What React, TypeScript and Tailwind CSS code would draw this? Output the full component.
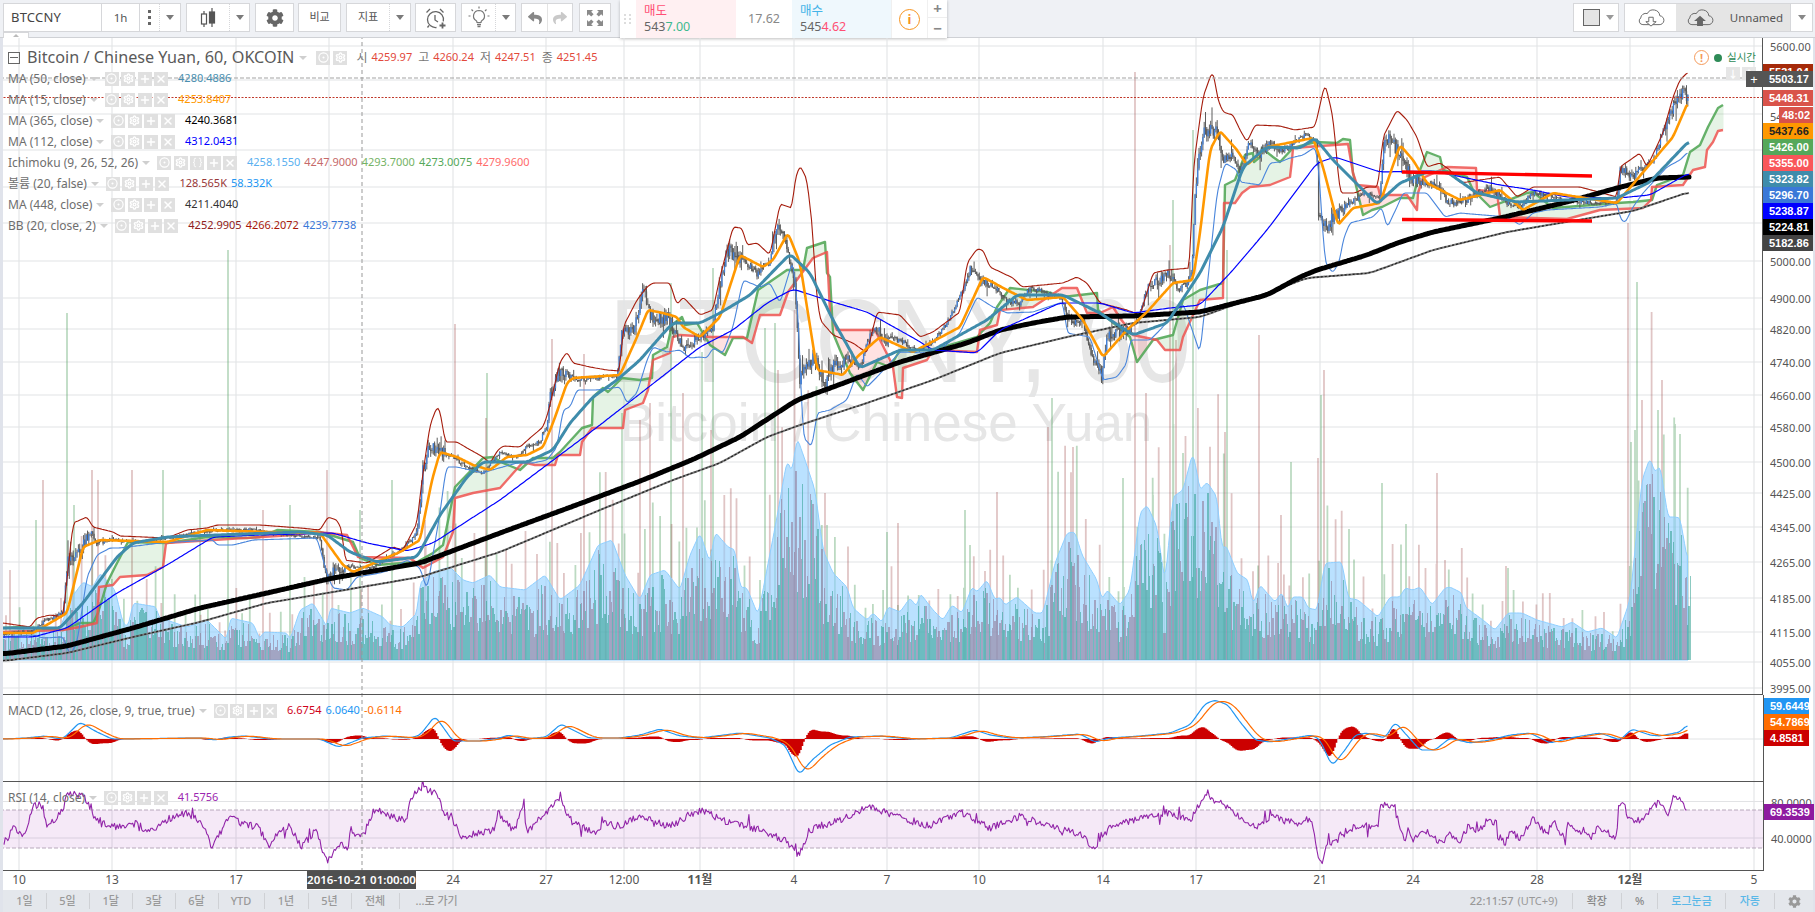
import { Braces, CircleDot, Plus, Settings, X } from "lucide-react";
import { FaCog, FaReply, FaShare } from "react-icons/fa";

type Pt = number[];

const pts = (s: string): Pt[] => s.trim().split(/\s+/).map((p) => p.split(",").map(Number));

const at = (k: Pt[], x: number) => {
    if (x <= k[0][0]) return k[0][1];
    for (let i = 1; i < k.length; i++) {
        const [x0, y0] = k[i - 1];
        const [x1, y1] = k[i];
        if (x >= x0 && x <= x1 && x1 > x0) return y0 + ((y1 - y0) * (x - x0)) / (x1 - x0);
    }
    return k[k.length - 1][1];
};

const toD = (p: Pt[]) => "M" + p.map(([x, y]) => `${x.toFixed(1)} ${y.toFixed(1)}`).join("L");

// resample the key points, then a box average so the lines read as moving averages
const smooth = (k: Pt[], r: number) => {
    const raw: Pt[] = [];
    for (let x = k[0][0]; x <= k[k.length - 1][0]; x += 1.5) raw.push([x, at(k, x)]);
    return raw.map(([x], i) => {
        let sum = 0;
        let n = 0;
        for (let j = Math.max(0, i - r); j <= Math.min(raw.length - 1, i + r); j++) {
            sum += raw[j][1];
            n++;
        }
        return [x, sum / n];
    });
};

let seed = 20161021;
const rnd = () => {
    seed = (seed * 1664525 + 1013904223) % 4294967296;
    return seed / 4294967296;
};

const ma365 = pts("3,654 67,646 133,628 200,608 267,593 333,578 420,563 500,533 579,504 643,480 694,459 740,437 797,400 833,387 900,362 967,343 1000,330 1033,323 1067,317 1133,316 1200,312 1267,295 1300,277 1317,270 1367,255 1400,242 1433,232 1500,218 1567,202 1617,188 1657,178 1689,177");
const ma448 = pts("3,661 67,653 133,637 200,622 267,603 333,592 420,577 500,552 600,510 673,480 720,463 767,437 800,425 867,403 933,380 1000,353 1067,337 1133,323 1200,317 1267,293 1307,278 1370,273 1433,250 1507,232 1590,218 1633,211 1689,192");
const ma112 = pts("3,637 33,637 67,628 117,593 167,565 213,537 260,535 333,533 367,543 407,551 433,543 500,500 600,425 700,347 733,330 767,303 793,289 833,302 867,312 917,340 933,350 977,353 1000,330 1060,303 1100,303 1133,313 1170,308 1200,305 1233,270 1267,230 1317,163 1335,157 1380,172 1433,171 1500,185 1533,190 1567,197 1618,198 1650,195 1689,173");
const ma50 = pts("3,628 60,628 83,603 117,557 133,543 167,537 217,535 300,532 327,535 350,552 377,562 417,557 440,515 467,477 483,462 527,462 553,450 570,423 593,397 617,380 640,360 660,337 673,323 700,323 720,313 750,295 790,254 810,273 833,320 860,368 900,350 933,350 987,320 1017,295 1063,295 1100,313 1133,335 1167,323 1200,273 1223,227 1243,167 1267,147 1300,148 1315,138 1333,160 1377,204 1400,183 1427,172 1447,172 1477,193 1517,202 1617,198 1650,182 1689,141");
const ma15 = pts("3,633 33,633 67,613 83,547 100,540 167,542 207,530 267,532 320,533 343,565 353,572 400,552 420,540 432,480 440,452 457,457 473,465 490,470 507,457 527,455 543,447 553,423 567,383 573,378 620,375 637,337 648,310 663,313 677,317 683,327 700,337 720,317 740,255 763,267 773,260 788,233 800,263 817,370 843,375 857,357 880,337 913,352 960,327 983,277 1007,290 1027,300 1063,297 1083,320 1103,357 1127,330 1147,312 1173,283 1193,280 1200,233 1210,150 1220,131 1237,150 1247,165 1267,147 1313,138 1323,167 1338,225 1353,208 1380,203 1400,145 1413,160 1427,183 1460,200 1500,190 1523,210 1553,193 1617,203 1673,137 1688,102");
const candles = pts("3,634 33,631 43,622 63,613 68,558 80,553 90,530 97,543 113,540 140,542 170,538 200,532 230,530 253,530 283,535 320,538 326,577 333,573 347,567 373,568 400,551 417,533 423,470 430,445 437,448 457,460 473,470 483,473 500,453 517,457 527,447 540,440 547,427 550,397 560,370 573,380 583,380 600,377 617,377 622,333 633,333 643,290 650,313 653,320 667,317 673,327 683,347 697,340 713,330 717,297 727,250 743,260 757,273 770,263 777,220 787,243 795,290 800,380 807,367 815,357 825,387 833,367 847,360 860,367 873,327 887,340 897,340 917,350 933,343 947,323 963,290 970,270 980,280 993,287 1007,300 1020,303 1030,288 1060,297 1070,320 1083,323 1093,357 1102,377 1107,333 1123,333 1137,323 1148,287 1167,273 1180,290 1192,277 1195,190 1200,147 1205,130 1217,130 1223,160 1233,157 1240,173 1250,140 1260,153 1270,143 1280,150 1290,147 1307,133 1317,143 1318,217 1327,230 1333,217 1350,203 1367,193 1380,197 1383,153 1387,137 1400,153 1413,180 1427,183 1440,187 1447,203 1467,200 1490,187 1507,203 1520,207 1533,193 1567,200 1593,203 1617,203 1620,167 1633,175 1653,160 1663,133 1675,103 1683,92 1688,100");
const bbUp = pts("3,623 30,627 37,618 50,615 63,617 73,523 87,517 93,527 113,532 120,536 167,538 187,530 207,528 217,525 260,525 300,528 320,530 328,517 337,520 343,533 344,560 367,563 393,547 403,550 417,523 422,480 430,425 437,407 440,410 445,442 457,442 467,448 483,457 490,463 498,450 503,446 520,447 530,438 543,427 548,413 560,362 567,352 573,363 590,367 607,370 620,371 623,327 637,300 647,287 653,283 670,283 677,305 683,297 700,315 713,310 720,277 733,227 742,228 747,245 757,243 770,255 780,204 792,208 795,180 800,165 807,180 813,233 815,280 820,320 833,335 853,343 867,353 877,312 900,315 920,337 933,332 960,312 967,263 977,249 983,250 990,267 1013,278 1022,287 1063,283 1077,277 1087,283 1100,303 1127,310 1140,315 1153,273 1167,270 1190,268 1193,170 1203,97 1212,72 1215,80 1217,97 1223,112 1233,115 1240,130 1247,142 1255,125 1280,126 1295,130 1315,127 1325,83 1333,117 1340,193 1355,193 1367,187 1378,187 1383,137 1397,110 1407,120 1417,137 1427,167 1440,163 1450,170 1460,183 1500,177 1517,197 1533,187 1580,187 1617,197 1620,167 1640,153 1647,167 1663,133 1673,97 1680,80 1688,72");
const bbLo = pts("3,637 33,635 43,638 63,637 70,655 77,643 87,577 97,555 110,548 120,548 160,543 213,540 217,545 233,545 253,540 317,538 328,577 333,588 347,590 357,577 380,573 390,570 407,560 420,568 427,590 440,513 445,475 447,467 457,467 483,473 492,470 517,463 533,463 547,460 557,447 563,410 570,407 577,390 597,390 620,387 627,403 637,393 647,360 653,347 667,352 680,350 690,358 700,357 707,358 713,348 723,353 733,327 743,280 760,287 770,283 780,303 793,260 798,313 803,437 812,447 817,413 830,410 847,400 857,373 867,387 877,377 900,352 927,353 940,350 960,333 977,297 993,307 1007,313 1033,312 1063,302 1067,333 1090,337 1103,380 1117,377 1127,363 1130,340 1150,340 1160,330 1183,303 1200,353 1210,260 1217,193 1225,163 1237,170 1240,182 1260,185 1270,163 1280,162 1290,158 1303,155 1315,147 1318,160 1325,263 1333,273 1340,260 1343,240 1350,223 1373,217 1382,207 1387,228 1397,207 1403,193 1427,193 1445,217 1460,213 1507,217 1520,225 1533,213 1547,210 1600,207 1618,203 1619,217 1625,223 1633,207 1643,193 1667,167 1680,160 1688,152");
const spanA = pts("3,628 20,627 63,630 80,623 93,623 98,613 107,583 115,567 128,542 167,543 207,537 247,538 260,537 277,530 320,532 353,542 360,558 377,565 417,562 433,553 443,545 455,487 483,458 493,457 503,463 520,470 533,458 553,458 560,452 582,428 592,425 593,397 603,388 608,392 622,378 640,380 652,378 653,355 667,347 672,325 682,317 685,325 697,323 710,345 725,355 733,338 747,338 758,290 787,270 803,270 807,248 825,242 827,273 830,277 833,333 840,350 850,373 863,390 877,362 890,367 900,350 933,350 977,337 990,323 997,307 1010,288 1047,292 1063,297 1080,295 1097,293 1098,310 1130,337 1137,362 1153,340 1173,335 1183,300 1200,290 1223,283 1225,185 1235,180 1245,155 1253,153 1254,162 1260,157 1262,148 1273,157 1280,162 1293,148 1315,142 1337,143 1343,139 1350,140 1353,173 1363,215 1372,210 1382,207 1400,198 1413,198 1420,170 1427,152 1440,157 1443,170 1467,177 1473,190 1490,207 1527,193 1533,192 1553,208 1617,203 1633,202 1652,200 1657,185 1683,175 1690,152 1700,145 1708,127 1718,108 1723,105");
const spanB = pts("3,632 63,630 80,627 97,623 99,587 113,585 120,577 147,575 163,567 166,543 293,535 317,532 347,535 358,557 410,558 423,568 443,557 453,532 455,498 473,493 500,488 523,462 535,465 555,465 558,455 580,455 582,442 592,428 623,428 625,410 643,403 648,390 653,360 670,353 673,337 680,335 712,337 743,337 752,343 760,315 780,315 788,292 813,258 827,252 828,272 830,313 837,330 875,330 890,360 893,367 897,397 902,398 903,368 927,360 933,350 977,352 980,330 997,325 1000,310 1033,307 1062,288 1077,288 1087,313 1100,313 1113,307 1120,318 1133,335 1157,340 1165,350 1180,350 1183,337 1200,300 1223,298 1224,203 1235,203 1242,193 1250,187 1270,185 1290,177 1292,160 1293,148 1348,144 1353,173 1357,185 1378,187 1380,195 1407,195 1417,210 1418,193 1423,178 1447,167 1476,168 1477,190 1497,192 1500,217 1567,219 1600,210 1643,208 1651,200 1652,187 1683,185 1693,170 1705,167 1707,150 1713,142 1718,131 1723,130");
const vma = pts("3,632 30,628 60,628 72,597 83,582 93,587 100,573 115,590 123,623 128,627 133,603 157,607 158,617 187,627 207,620 227,640 230,618 253,623 260,640 263,632 287,633 290,640 300,610 313,603 327,627 330,608 350,613 363,608 383,617 390,625 403,627 417,613 420,583 433,572 450,567 463,580 473,583 490,575 500,587 525,590 545,575 560,600 580,585 598,545 612,540 625,575 640,600 650,575 665,570 680,590 690,555 700,533 710,563 715,532 728,547 735,550 740,587 747,588 758,615 763,590 777,517 787,460 792,472 797,437 805,460 815,490 823,550 833,573 847,587 853,608 867,620 873,613 882,622 888,607 900,612 910,598 917,607 920,593 933,610 943,620 952,605 962,613 972,587 977,592 987,580 995,600 1000,597 1005,605 1017,597 1035,613 1043,613 1055,563 1067,533 1075,532 1082,555 1097,580 1102,600 1107,590 1120,605 1130,590 1140,513 1147,505 1157,527 1165,583 1173,497 1183,490 1193,452 1200,490 1207,482 1217,497 1222,550 1226,545 1237,573 1248,580 1253,605 1260,585 1275,602 1282,592 1288,610 1292,597 1303,597 1308,608 1317,610 1325,563 1342,562 1348,598 1358,600 1378,617 1390,597 1400,597 1405,588 1413,590 1420,587 1432,605 1445,588 1450,587 1462,593 1465,607 1483,620 1495,630 1508,613 1522,613 1537,620 1562,627 1572,622 1587,632 1602,628 1617,638 1630,600 1642,480 1650,458 1655,473 1660,465 1668,517 1675,517 1680,518 1688,563");
const macd = pts("3,739 26,738 45,736 60,739 65,737 80,722 95,731 112,739 200,738 215,740 230,737 245,736 270,739 320,739 338,747 350,743 362,738 385,736 410,738 420,735 435,716 453,741 480,741 500,738 508,735 525,739 546,737 561,724 589,738 620,738 640,735 660,729 680,736 700,738 740,733 770,738 785,745 799,775 812,760 830,745 850,737 880,736 910,739 950,738 975,730 990,735 1010,738 1040,737 1080,734 1095,742 1110,738 1140,736 1170,733 1190,725 1205,704 1215,700 1228,705 1240,722 1255,740 1270,742 1300,737 1312,735 1320,740 1332,766 1345,750 1355,735 1367,733 1385,738 1395,722 1420,750 1435,750 1450,738 1470,743 1490,740 1510,735 1530,733 1550,743 1575,737 1600,733 1620,740 1632,729 1650,735 1660,736 1680,732 1688,724");
const rsi = pts("4,843 14,828 24,835 34,806 40,805 47,827 63,810 67,792 85,797 93,815 99,823 119,827 138,823 148,833 166,820 186,813 202,823 209,840 212,848 229,817 241,823 257,827 269,843 289,825 302,847 316,830 326,862 340,843 348,850 350,832 362,837 374,810 395,818 407,820 411,797 423,787 435,793 445,813 455,823 462,837 494,830 498,813 514,832 524,802 526,832 546,813 559,798 573,823 595,833 605,823 619,827 640,815 670,826 700,810 730,823 760,830 785,840 799,856 810,830 840,820 870,806 900,818 930,826 960,812 990,828 1020,816 1050,826 1080,834 1095,850 1110,826 1140,818 1170,812 1190,822 1204,795 1225,806 1255,828 1270,816 1300,825 1305,818 1312,822 1317,853 1323,863 1325,848 1333,840 1337,843 1340,833 1360,825 1378,828 1380,807 1387,803 1395,808 1400,827 1405,843 1408,830 1413,842 1423,828 1443,845 1448,832 1460,840 1468,827 1477,832 1488,820 1497,823 1498,847 1500,835 1505,845 1510,830 1520,840 1532,818 1547,835 1553,820 1565,840 1567,825 1590,838 1598,827 1617,837 1618,803 1625,803 1627,820 1640,820 1650,810 1658,803 1663,805 1667,818 1673,798 1682,798 1687,812");

// tall volume bars that rise well above the average line: x, top, g/p
const spikes: [number, number, string][] = [
    [10, 570, "p"], [36, 520, "g"], [43, 480, "p"], [67, 313, "g"], [74, 505, "g"], [92, 470, "p"], [98, 480, "p"], [132, 470, "p"], [163, 470, "g"], [200, 500, "g"], [228, 250, "g"], [263, 510, "p"], [290, 505, "g"], [327, 470, "p"], [360, 510, "g"], [392, 480, "g"], [425, 520, "p"], [455, 324, "p"], [487, 373, "g"], [486, 418, "p"], [552, 339, "p"], [584, 354, "p"], [622, 413, "g"], [640, 420, "p"], [650, 403, "p"], [671, 283, "g"], [683, 393, "p"], [702, 352, "g"], [713, 268, "g"], [711, 430, "p"], [765, 328, "g"], [775, 323, "g"], [778, 370, "p"], [825, 493, "p"], [827, 525, "g"], [887, 532, "g"], [898, 523, "p"], [965, 510, "g"], [970, 545, "g"], [997, 492, "p"], [1048, 427, "p"], [1052, 398, "g"], [1073, 447, "p"], [1123, 478, "g"], [1135, 72, "p"], [1153, 495, "g"], [1170, 245, "p"], [1173, 200, "g"], [1176, 340, "p"], [1183, 453, "g"], [1193, 130, "g"], [1225, 432, "p"], [1227, 250, "g"], [1259, 335, "p"], [1281, 515, "p"], [1291, 462, "g"], [1318, 458, "p"], [1321, 395, "g"], [1324, 370, "p"], [1349, 529, "g"], [1382, 483, "g"], [1406, 524, "g"], [1437, 473, "p"], [1445, 560, "p"], [1506, 566, "p"], [1508, 568, "g"], [1628, 223, "p"], [1631, 442, "g"], [1635, 430, "g"], [1637, 282, "g"], [1642, 400, "p"], [1658, 410, "g"], [1662, 380, "p"], [1675, 424, "g"], [1680, 434, "g"],
];

const buildVolume = () => {
    let g = "";
    let p = "";
    let tallG = "";
    let tallP = "";
    for (let x = 3; x <= 1691; x += 1.3) {
        const h = 660 - at(vma, x);
        const r = 0.3 + rnd() * 0.66;
        const seg = `M${x.toFixed(1)} 660V${(660 - h * r).toFixed(1)}`;
        if (rnd() > 0.5) g += seg;
        else p += seg;
    }
    for (let x = 6; x <= 1690; x += 5 + rnd() * 9) {
        const h = 660 - at(vma, x);
        const seg = `M${x.toFixed(1)} 660V${(660 - h * (1.05 + rnd() * 0.8)).toFixed(1)}`;
        if (rnd() > 0.5) tallG += seg;
        else tallP += seg;
    }
    for (const [x, top, c] of spikes) {
        if (c === "g") tallG += `M${x} 660V${top}`;
        else tallP += `M${x} 660V${top}`;
    }
    return { g, p, tallG, tallP };
};

const buildCandles = () => {
    let wick = "";
    let down = "";
    let up = "";
    let prev = at(candles, 3);
    for (let x = 3; x <= 1689; x += 1.3) {
        const amp = Math.min(8, Math.max(1.6, (at(bbLo, x) - at(bbUp, x)) / 9));
        const c = at(candles, x) + (rnd() - 0.5) * amp * 1.6;
        const hi = Math.min(prev, c) - rnd() * amp * (rnd() > 0.9 ? 2.4 : 0.8);
        const lo = Math.max(prev, c) + rnd() * amp * (rnd() > 0.9 ? 2.4 : 0.8);
        wick += `M${x.toFixed(1)} ${hi.toFixed(1)}V${lo.toFixed(1)}`;
        const seg = `M${x.toFixed(1)} ${prev.toFixed(1)}V${c.toFixed(1)}`;
        if (c < prev && prev - c > 2) up += seg;
        else down += seg;
        prev = c;
    }
    return { wick, down, up };
};

const buildCloud = () => {
    let above = "";
    let below = "";
    for (let x = 3; x <= 1723; x += 1) {
        const a = at(spanA, x);
        const b = at(spanB, x);
        const seg = `M${x} ${a.toFixed(1)}V${b.toFixed(1)}`;
        if (a < b) above += seg;
        else below += seg;
    }
    return { above, below };
};

const vol = buildVolume();
const cand = buildCandles();
const cloud = buildCloud();

const vmaD = toD(smooth(vma, 1));
const blue = smooth(macd, 2);
const orange = blue.map(([x], i) => {
    let s = 0;
    let n = 0;
    for (let j = Math.max(0, i - 9); j <= i; j++) {
        s += blue[j][1];
        n++;
    }
    return [x, s / n];
});
const histD = blue.map(([x, y], i) => `M${x.toFixed(1)} 739V${(739 - (orange[i][1] - y) * 1.3).toFixed(1)}`).join("");

const rsiPts: Pt[] = [];
for (let x = 4; x <= 1687; x += 1.3) rsiPts.push([x, at(rsi, x) + (rnd() - 0.5) * 7 + (rnd() > 0.95 ? (rnd() - 0.5) * 22 : 0)]);

const vGrid = [19, 112, 236, 329, 453, 546, 624, 700, 794, 887, 979, 1103, 1196, 1320, 1413, 1537, 1630, 1754];
const hGrid = [46, 80, 114, 150, 187, 223, 261, 298, 329, 362, 395, 427, 462, 493, 527, 562, 598, 632, 662, 688];
const CROSS_X = 362;

const Grid = ({ rows }: { rows: number[] }) => (
    <g stroke="#e2e3e5" strokeWidth="1.1">
        {vGrid.map((x) => (
            <line key={x} x1={x} x2={x} y1="0" y2="900" />
        ))}
        {rows.map((y) => (
            <line key={y} x1="0" x2="1770" y1={y} y2={y} />
        ))}
    </g>
);

const Cross = () => <line x1={CROSS_X} x2={CROSS_X} y1="0" y2="900" stroke="#999" strokeWidth="1" strokeDasharray="4 3" />;

const MainChart = () => (
    <svg viewBox="3 38 1760 656" width="1760" height="656" fill="none" className="absolute inset-0" aria-hidden="true">
        <Grid rows={hGrid} />
        <g strokeWidth="1.8">
            <path d={vol.tallG} stroke="#4f9f5f" strokeOpacity="0.38" />
            <path d={vol.tallP} stroke="#a04a4a" strokeOpacity="0.32" />
        </g>
        <path d={`${vmaD}L1688 660L3 660Z`} fill="#8fcfff" fillOpacity="0.62" stroke="#8fcfff" strokeWidth="1" />
        <g strokeWidth="1.3" shapeRendering="crispEdges">
            <path d={vol.g} stroke="#2e9e8e" strokeOpacity="0.55" />
            <path d={vol.p} stroke="#8a6a88" strokeOpacity="0.5" />
        </g>
        <path d={cloud.above} stroke="#4caf50" strokeOpacity="0.14" strokeWidth="1" />
        <path d={cloud.below} stroke="#ff4444" strokeOpacity="0.16" strokeWidth="1" />
        <path d={toD(spanA)} stroke="#55a85a" strokeOpacity="0.9" strokeWidth="2.4" strokeLinejoin="round" />
        <path d={toD(spanB)} stroke="#ef5350" strokeOpacity="0.85" strokeWidth="2.4" strokeLinejoin="round" />
        <path d={cand.wick} stroke="#5c5c5c" strokeWidth="1" />
        <path d={cand.down} stroke="#5c5c5c" strokeWidth="1.3" />
        <path d={cand.up} stroke="#3f80dc" strokeWidth="1.3" />
        <path d={toD(smooth(bbUp, 1))} stroke="#a51c0c" strokeWidth="1.1" />
        <path d={toD(smooth(bbLo, 1))} stroke="#4a86dc" strokeWidth="1.1" />
        <path d={toD(smooth(ma448, 4))} stroke="#777" strokeWidth="2" />
        <path d={toD(smooth(ma448, 4))} stroke="#222" strokeWidth="1.2" strokeDasharray="2 2" />
        <path d={toD(smooth(ma365, 4))} stroke="#000" strokeWidth="5" strokeLinecap="round" />
        <path d={toD(smooth(ma112, 3))} stroke="#0000ff" strokeWidth="1.2" />
        <path d={toD(smooth(ma15, 1))} stroke="#ff9800" strokeWidth="2.6" strokeLinejoin="round" />
        <path d={toD(smooth(ma50, 2))} stroke="#3f8cab" strokeWidth="3" strokeLinejoin="round" />
        <line x1="1402" x2="1592" y1="172" y2="176" stroke="#ff0000" strokeWidth="3.4" />
        <line x1="1402" x2="1592" y1="219.5" y2="221" stroke="#ff0000" strokeWidth="3.4" />
        <line x1="0" x2="1770" y1="78" y2="78" stroke="#a3a3a3" strokeWidth="1" strokeDasharray="4 2" />
        <line x1="0" x2="1770" y1="97.5" y2="97.5" stroke="#c0392b" strokeWidth="1" strokeDasharray="2 1.5" />
        <Cross />
    </svg>
);

const MacdChart = () => (
    <svg viewBox="3 695 1760 86" width="1760" height="86" fill="none" className="absolute inset-0" aria-hidden="true">
        <Grid rows={[739]} />
        <path d={histD} stroke="#cc0000" strokeWidth="1.6" />
        <path d={toD(blue)} stroke="#2196f3" strokeWidth="1.2" />
        <path d={toD(orange)} stroke="#ff6d00" strokeWidth="1.2" />
        <Cross />
    </svg>
);

const RsiChart = () => (
    <svg viewBox="3 782 1760 88" width="1760" height="88" fill="none" className="absolute inset-0" aria-hidden="true">
        <Grid rows={[801.5, 838]} />
        <rect x="0" y="810" width="1770" height="38" fill="#9c27b0" fillOpacity="0.1" />
        <line x1="0" x2="1770" y1="810" y2="810" stroke="#b7a8bb" strokeWidth="1" strokeDasharray="4 2" />
        <line x1="0" x2="1770" y1="848" y2="848" stroke="#b7a8bb" strokeWidth="1" strokeDasharray="4 2" />
        <path d={toD(rsiPts)} stroke="#9124a8" strokeWidth="1.1" strokeLinejoin="round" />
        <Cross />
    </svg>
);

const Caret = ({ className = "" }: { className?: string }) => (
    <span className={`h-0 w-0 border-x-[4.5px] border-t-[5px] border-x-transparent border-t-[#7a7a7a] ${className}`} />
);

const MiniCaret = () => <span className="block h-0 w-0 border-x-[4px] border-t-[4px] border-x-transparent border-t-[#cfcfcf]" />;

const Box = ({ children }: { children: React.ReactNode }) => (
    <span className="flex h-[14px] w-[14px] items-center justify-center bg-[#e0e0e0] text-white">{children}</span>
);

const LegendIcons = ({ braces = false, from }: { braces?: boolean; from: string }) => (
    <span className={`flex items-center gap-[2.5px] ${from}`}>
        <Box>
            <CircleDot size={11} strokeWidth={2.5} />
        </Box>
        <Box>
            <Settings size={11} strokeWidth={3} />
        </Box>
        {braces && (
            <Box>
                <Braces size={11} strokeWidth={2} />
            </Box>
        )}
        <Box>
            <Plus size={12} strokeWidth={3} />
        </Box>
        <Box>
            <X size={12} strokeWidth={3} />
        </Box>
    </span>
);

type Val = { t: string; c: string };

const LegendRow = ({ label, vals, braces, gap = "ml-[7px]" }: { label: string; vals: Val[]; braces?: boolean; gap?: string }) => (
    <div className="flex h-[21px] items-center text-[12px] text-[#6e6e6e]">
        <span className="whitespace-nowrap">{label}</span>
        <span className="ml-[4px]">
            <MiniCaret />
        </span>
        <LegendIcons braces={braces} from={gap} />
        <span className="ml-[10px] flex gap-[4px] whitespace-nowrap text-[11px]">
            {vals.map((v) => (
                <span key={v.t} className={v.c}>
                    {v.t}
                </span>
            ))}
        </span>
    </div>
);

const Legend = () => (
    <div className="absolute left-[5px] top-0 flex flex-col pt-[9px]">
        <div className="flex h-[21px] items-center whitespace-nowrap">
            <span className="relative flex h-[12px] w-[12px] items-center justify-center border border-[#666]">
                <span className="h-px w-[8px] bg-[#666]" />
            </span>
            <span className="ml-[7px] text-[16.2px] text-[#5a5a5a]">Bitcoin / Chinese Yuan, 60, OKCOIN</span>
            <span className="ml-[5px]">
                <MiniCaret />
            </span>
            <span className="ml-[9px] flex gap-[3px]">
                <Box>
                    <CircleDot size={11} strokeWidth={2.5} />
                </Box>
                <Box>
                    <Settings size={11} strokeWidth={3} />
                </Box>
            </span>
            <span className="ml-[9px] flex gap-[6px] text-[12px] text-[#777]">
                {[["시", "4259.97"], ["고", "4260.24"], ["저", "4247.51"], ["종", "4251.45"]].map(([k, v]) => (
                    <span key={k} className="flex items-center gap-[4px]">
                        <span>{k}</span>
                        <span className="text-[11px] text-[#e2493b]">{v}</span>
                    </span>
                ))}
            </span>
        </div>
        <LegendRow label="MA (50, close)" vals={[{ t: "4280.4886", c: "text-[#4a8fb0]" }]} />
        <LegendRow label="MA (15, close)" vals={[{ t: "4253.8407", c: "text-[#ff9800]" }]} />
        <LegendRow label="MA (365, close)" vals={[{ t: "4240.3681", c: "text-black" }]} />
        <LegendRow label="MA (112, close)" vals={[{ t: "4312.0431", c: "text-[#0000ff]" }]} />
        <LegendRow
            label="Ichimoku (9, 26, 52, 26)"
            braces
            vals={[
                { t: "4258.1550", c: "text-[#5ab0f0]" },
                { t: "4247.9000", c: "text-[#c66a6a]" },
                { t: "4293.7000", c: "text-[#75b366]" },
                { t: "4273.0075", c: "text-[#55a85a]" },
                { t: "4279.9600", c: "text-[#ff6b6b]" },
            ]}
        />
        <LegendRow
            label="볼륨 (20, false)"
            vals={[
                { t: "128.565K", c: "text-[#983838]" },
                { t: "58.332K", c: "text-[#2196f3]" },
            ]}
        />
        <LegendRow label="MA (448, close)" vals={[{ t: "4211.4040", c: "text-[#333]" }]} />
        <LegendRow
            label="BB (20, close, 2)"
            vals={[
                { t: "4252.9905", c: "text-[#8f2020]" },
                { t: "4266.2072", c: "text-[#a8180a]" },
                { t: "4239.7738", c: "text-[#3a78d8]" },
            ]}
        />
    </div>
);

const Tick = ({ y, children }: { y: number; children: string }) => (
    <span className="absolute left-[7px] -translate-y-1/2 text-[11px] leading-none text-[#555]" style={{ top: y }}>
        {children}
    </span>
);

const Tag = ({ y, bg, w = "w-[50px]", text = "text-white", children }: { y: number; bg: string; w?: string; text?: string; children: string }) => (
    <span className={`absolute left-0 flex h-[16px] items-center whitespace-nowrap pl-[6px] font-['Liberation_Sans',sans-serif] text-[11px] font-bold leading-none ${w} ${bg} ${text}`} style={{ top: y }}>
        {children}
    </span>
);

const MainAxis = () => (
    <div className="relative h-full w-[50px]">
        {[
            ["5600.00", 46], ["5400.00", 116], ["5000.00", 261], ["4900.00", 298], ["4820.00", 329], ["4740.00", 362], ["4660.00", 395], ["4580.00", 427], ["4500.00", 462], ["4425.00", 493], ["4345.00", 527], ["4265.00", 562], ["4185.00", 598], ["4115.00", 632], ["4055.00", 662], ["3995.00", 688],
        ].map(([t, y]) => (
            <Tick key={t as string} y={(y as number) - 38}>
                {t as string}
            </Tick>
        ))}
        <Tag y={26} bg="bg-[#a52a0a]">5531.04</Tag>
        <Tag y={33} bg="bg-[#555]">5503.17</Tag>
        <Tag y={52} bg="bg-[#d9534a]">5448.31</Tag>
        <span className="absolute left-[16px] top-[69px] flex h-[16px] w-[34px] items-center justify-center bg-[#d9534a] font-['Liberation_Sans',sans-serif] text-[11px] font-bold leading-none text-white">48:02</span>
        <Tag y={85} bg="bg-[#ff9800]" text="text-[#222]">5437.66</Tag>
        <Tag y={101} bg="bg-[#55a85a]">5426.00</Tag>
        <Tag y={117} bg="bg-[#f9565a]">5355.00</Tag>
        <Tag y={133} bg="bg-[#3f8cab]">5323.82</Tag>
        <Tag y={149} bg="bg-[#3a78d8]">5296.70</Tag>
        <Tag y={165} bg="bg-[#0000ff]">5238.87</Tag>
        <Tag y={181} bg="bg-black">5224.81</Tag>
        <Tag y={197} bg="bg-[#444]">5182.86</Tag>
    </div>
);

const Status = () => (
    <div className="absolute right-[6px] top-[12px] flex flex-col items-end gap-[2px]">
        <div className="flex items-center gap-[5px]">
            <span className="flex h-[15px] w-[15px] items-center justify-center rounded-full border-[1.5px] border-[#f59a5a] text-[11px] font-bold leading-none text-[#f59a5a]">!</span>
            <span className="h-[8px] w-[8px] rounded-full bg-[#2e8b57]" />
            <span className="text-[10.5px] leading-none text-[#2e8b57]">실시간</span>
        </div>
        <div className="flex gap-[2px]">
            <span className="flex h-[13px] w-[14px] items-center justify-center bg-[#e6e6e6] text-[10px] font-bold leading-none text-white">↓</span>
            <span className="flex h-[13px] w-[14px] items-center justify-center bg-[#e6e6e6] text-[10px] font-bold leading-none text-white">↑</span>
        </div>
    </div>
);

const Btn = ({ w, children, className = "" }: { w: string; children?: React.ReactNode; className?: string }) => (
    <span className={`flex h-full items-center justify-center ${w} ${className}`}>{children}</span>
);

const Group = ({ children, className = "" }: { children: React.ReactNode; className?: string }) => (
    <div className={`flex h-[29px] items-stretch border border-[#d6d7da] bg-white text-[#555] ${className}`}>{children}</div>
);

const CandleIcon = () => (
    <svg width="18" height="22" viewBox="0 0 18 22" fill="none" stroke="#555" strokeWidth="1.2" aria-hidden="true">
        <path d="M5 4v3M5 17v3M13 1v4M13 16v4" />
        <rect x="2.5" y="7" width="5" height="10" fill="#fff" />
        <rect x="10.5" y="5" width="5" height="11" fill="#555" />
    </svg>
);

const AlarmIcon = () => (
    <svg width="24" height="24" viewBox="0 0 24 24" fill="none" stroke="#666" strokeWidth="1.3" aria-hidden="true">
        <path d="M12.5 21.5a8 8 0 1 1 6.8-6.2" />
        <path d="M11 9v5l3 2M2.5 6.5l3.5-3.5M16 3l3.5 3.5M5 19.5l-1.5 2" />
        <path d="M18.5 16.5v6M15.5 19.5h6" strokeWidth="1.8" />
    </svg>
);

const BulbIcon = () => (
    <svg width="22" height="24" viewBox="0 0 22 24" fill="none" stroke="#777" strokeWidth="1.2" aria-hidden="true">
        <path d="M11 4.5a5.5 5.5 0 0 0-3 10.1c.7.5 1 1.1 1 1.9h4c0-.8.3-1.4 1-1.9a5.5 5.5 0 0 0-3-10.1z" />
        <path d="M9 18.5h4M9.5 20.5h3" strokeWidth="1.5" />
        <path d="M11 .5v2M3.5 3.5l1.5 1.5M18.5 3.5L17 5M.5 10h2M19.5 10h2" />
    </svg>
);

const ExpandIcon = () => (
    <svg width="20" height="20" viewBox="0 0 20 20" fill="#8a8a8a" aria-hidden="true">
        <path d="M2 2h6L6.2 3.8 8.6 6.2 6.2 8.6 3.8 6.2 2 8zM18 2v6l-1.8-1.8-2.4 2.4-2.4-2.4 2.4-2.4L12 2zM2 18v-6l1.8 1.8 2.4-2.4 2.4 2.4-2.4 2.4L8 18zM18 18h-6l1.8-1.8-2.4-2.4 2.4-2.4 2.4 2.4L18 12z" />
    </svg>
);

const CLOUD = "M8 21h22a6 6 0 0 0 1-12 9 9 0 0 0-17-3 7 7 0 0 0-9 6 5 5 0 0 0 3 9z";

const CloudDown = () => (
    <svg width="28" height="18" viewBox="0 0 38 24" fill="none" stroke="#666" strokeWidth="1.3" aria-hidden="true">
        <path d={CLOUD} />
        <path d="M16 11h6v6h4l-7 6-7-6h4z" fill="#fff" />
    </svg>
);

const CloudUp = () => (
    <svg width="28" height="18" viewBox="0 0 38 24" fill="none" stroke="#666" strokeWidth="1.3" aria-hidden="true">
        <path d={CLOUD} />
        <path d="M19 9l8 7h-4v7h-8v-7h-4z" fill="#666" stroke="none" />
    </svg>
);

const Toolbar = () => (
    <header className="relative flex h-[38px] shrink-0 items-start gap-[5px] border-b border-[#cfd1d5] bg-[#eff1f5] pl-[3px] pr-[2px] pt-[3px]">
        <Group className="w-[178px]">
            <span className="flex w-[98px] items-center border-r border-[#d6d7da] pl-[7px] text-[13px] tracking-[0.2px] text-[#444]">BTCCNY</span>
            <Btn w="w-[38px]" className="border-r border-[#d6d7da] text-[11.5px]">1h</Btn>
            <Btn w="w-[20px]" className="border-r border-dotted border-[#d6d7da]">
                <span className="flex flex-col gap-[3px]">
                    <span className="h-[3px] w-[3px] bg-[#666]" />
                    <span className="h-[3px] w-[3px] bg-[#666]" />
                    <span className="h-[3px] w-[3px] bg-[#666]" />
                </span>
            </Btn>
            <Btn w="flex-1"><Caret /></Btn>
        </Group>
        <Group className="w-[64px]">
            <Btn w="w-[43px]" className="border-r border-dotted border-[#d6d7da]"><CandleIcon /></Btn>
            <Btn w="flex-1"><Caret /></Btn>
        </Group>
        <Group className="w-[39px] justify-center">
            <Btn w="w-full"><FaCog size={18} color="#666" /></Btn>
        </Group>
        <Group className="ml-[-1px] w-[43px]">
            <Btn w="w-full" className="text-[11px]">비교</Btn>
        </Group>
        <Group className="w-[65px]">
            <Btn w="w-[43px]" className="border-r border-dotted border-[#d6d7da] text-[11px]">지표</Btn>
            <Btn w="flex-1"><Caret /></Btn>
        </Group>
        <Group className="ml-[-1px] w-[41px]">
            <Btn w="w-full"><AlarmIcon /></Btn>
        </Group>
        <Group className="w-[55px]">
            <Btn w="w-[34px]" className="border-r border-dotted border-[#d6d7da]"><BulbIcon /></Btn>
            <Btn w="flex-1"><Caret /></Btn>
        </Group>
        <Group className="w-[52px]">
            <Btn w="w-[26px]" className="border-r border-[#e4e4e4]"><FaReply size={14} color="#888" /></Btn>
            <Btn w="flex-1"><FaShare size={14} color="#c9c9c9" /></Btn>
        </Group>
        <Group className="ml-px w-[32px]">
            <Btn w="w-full"><ExpandIcon /></Btn>
        </Group>

        <div className="ml-auto flex gap-[5px]">
            <Group className="w-[46px]">
                <Btn w="w-[29px]" className="pl-[5px]">
                    <span className="h-[17px] w-[17px] border border-[#666] bg-[#e4e4e4]" />
                </Btn>
                <Btn w="flex-1"><Caret className="mr-[2px] border-t-[#999]" /></Btn>
            </Group>
            <Group className="w-[189px]">
                <Btn w="w-[51px]"><CloudDown /></Btn>
                <Btn w="w-[47px]" className="bg-[#e5e5e5]"><CloudUp /></Btn>
                <Btn w="w-[67px]" className="bg-[#e5e5e5] text-[11.5px]">Unnamed</Btn>
                <Btn w="flex-1" className="border-l border-[#d6d7da]"><Caret className="border-t-[#888]" /></Btn>
            </Group>
        </div>

        <div className="absolute left-[3px] top-[32px] flex h-[6px] w-[26px] items-center justify-center border-x border-t border-[#d6d7da] bg-white">
            <span className="h-0 w-0 border-x-[3px] border-b-[3px] border-x-transparent border-b-[#bbb]" />
        </div>

        <div className="absolute left-[620px] top-0 flex h-[38px] w-[327px] bg-white shadow-[0_1px_3px_rgba(0,0,0,0.25)]">
            <span className="grid w-[16px] grid-cols-2 content-center justify-center gap-[2px] px-[4px]">
                {[0, 1, 2, 3, 4, 5].map((i) => (
                    <span key={i} className="h-[2px] w-[2px] bg-[#ddd]" />
                ))}
            </span>
            <div className="flex w-[100px] flex-col justify-center bg-[#fff0f2] pl-[8px] text-[12.5px] leading-[16px]">
                <span className="text-[#ff4f74]">매도</span>
                <span className="text-[#666]">543<span className="text-[#3dba8f]">7.00</span></span>
            </div>
            <span className="flex w-[56px] items-center justify-center text-[12.5px] text-[#888]">17.62</span>
            <div className="flex w-[99px] flex-col justify-center bg-[#eff8fd] pl-[8px] text-[12.5px] leading-[16px]">
                <span className="text-[#45b4e8]">매수</span>
                <span className="text-[#666]">545<span className="text-[#ff4f74]">4.62</span></span>
            </div>
            <span className="flex w-[37px] items-center justify-center border-x border-[#f0f0f0]">
                <span className="flex h-[21px] w-[21px] items-center justify-center rounded-full border-[1.5px] border-[#f7931e] text-[13px] font-bold leading-none text-[#f7931e]">i</span>
            </span>
            <span className="flex flex-1 flex-col text-[#888]">
                <span className="flex h-[18px] items-center justify-center border-b border-[#eee] text-[15px] font-bold leading-none">+</span>
                <span className="flex flex-1 items-center justify-center text-[15px] font-bold leading-none">−</span>
            </span>
        </div>
    </header>
);

const timeLabels: [number, string, boolean][] = [
    [19, "10", false], [112, "13", false], [236, "17", false], [453, "24", false], [546, "27", false], [624, "12:00", false], [700, "11월", true], [794, "4", false], [887, "7", false], [979, "10", false], [1103, "14", false], [1196, "17", false], [1320, "21", false], [1413, "24", false], [1537, "28", false], [1630, "12월", true], [1754, "5", false],
];

const TimeAxis = () => (
    <div className="relative h-[19px] shrink-0 bg-white text-[12px] text-[#555]">
        {timeLabels.map(([x, t, bold]) => (
            <span key={`${x}${t}`} className={`absolute top-[2px] -translate-x-1/2 leading-[14px] ${bold ? "font-bold" : ""}`} style={{ left: x - 3 }}>
                {t}
            </span>
        ))}
        <span className="absolute left-[304px] top-0 flex h-[18px] w-[109px] items-center justify-center bg-[#4f4f4f] text-[11.5px] font-semibold text-white">2016-10-21 01:00:00</span>
    </div>
);

const ranges = [
    ["1일", "w-[43px]"], ["5일", "w-[43px]"], ["1달", "w-[43.5px]"], ["3달", "w-[42.5px]"], ["6달", "w-[43px]"], ["YTD", "w-[46px]"], ["1년", "w-[44px]"], ["5년", "w-[43px]"], ["전체", "w-[48px]"],
];

const Sep = () => <span className="block h-[16px] w-px bg-[#cfd1d5]" />;

const BottomBar = () => (
    <div className="flex h-[22px] shrink-0 items-center bg-[#e4e7ec] pl-[0.5px] text-[11px] font-medium text-[#999]">
        {ranges.map(([t, w]) => (
            <span key={t} className={`flex h-[16px] items-center justify-center border-r border-[#cfd1d5] ${w}`}>
                {t}
            </span>
        ))}
        <span className="ml-[16px]">...로 가기</span>
        <span className="ml-auto flex items-center">
            <span className="text-[#999]">22:11:57</span>
            <span className="ml-[4px] font-normal text-[#999]">(UTC+9)</span>
            <span className="ml-[14px]"><Sep /></span>
            <span className="mx-[14px] text-[#888]">확장</span>
            <Sep />
            <span className="mx-[13px] text-[#888]">%</span>
            <Sep />
            <span className="mx-[13px] text-[#5ab8e8]">로그눈금</span>
            <Sep />
            <span className="mx-[14px] text-[#5ab8e8]">자동</span>
            <Sep />
            <span className="ml-[13px] mr-[12px]"><FaCog size={13} color="#999" /></span>
        </span>
    </div>
);

export default function App() {
    return (
        <div className="flex h-[912px] w-[1815px] flex-col overflow-hidden bg-white font-['Noto_Sans','Noto_Sans_CJK_KR',sans-serif]">
            <Toolbar />
            <div className="flex min-h-0 flex-1 flex-col border-x-[2px] border-[#e0e3eb] border-l-[3px]">
                <section className="flex h-[657px] shrink-0">
                    <div className="relative h-full w-[1760px] overflow-hidden border-b border-[#555]">
                        <div className="absolute left-[606px] top-[244px] origin-top-left scale-y-[1.15] whitespace-nowrap font-['Liberation_Sans',sans-serif] text-[103px] leading-none text-[#e6e6e6]">BTCCNY, 60</div>
                        <div className="absolute left-[617px] top-[358px] whitespace-nowrap font-['Liberation_Sans',sans-serif] text-[53px] leading-none text-[#e6e6e6]">Bitcoin / Chinese Yuan</div>
                        <MainChart />
                        <Legend />
                        <Status />
                        <span className="absolute right-0 top-[33px] flex h-[16px] w-[16px] items-center justify-center bg-[#555] text-[13px] leading-none text-white">+</span>
                    </div>
                    <div className="h-full border-l border-[#555]">
                        <MainAxis />
                    </div>
                </section>
                <section className="flex h-[87px] shrink-0">
                    <div className="relative h-full w-[1760px] overflow-hidden border-b border-[#555]">
                        <MacdChart />
                        <div className="absolute left-[5px] top-[5px]">
                            <LegendRow
                                label="MACD (12, 26, close, 9, true, true)"
                                vals={[
                                    { t: "6.6754", c: "text-[#d0021b]" },
                                    { t: "6.0640", c: "text-[#2196f3]" },
                                    { t: "-0.6114", c: "text-[#ff6d00]" },
                                ]}
                            />
                        </div>
                    </div>
                    <div className="relative h-full w-[50px] border-l border-[#555]">
                        <Tag y={3} bg="bg-[#2196f3]" w="w-[45px]">59.6449</Tag>
                        <Tag y={19} bg="bg-[#ff6d00]" w="w-[45px]">54.7869</Tag>
                        <Tag y={35} bg="bg-[#cc0000]" w="w-[45px]">4.8581</Tag>
                    </div>
                </section>
                <section className="flex h-[89px] shrink-0">
                    <div className="relative h-full w-[1760px] overflow-hidden border-b border-[#555]">
                        <RsiChart />
                        <div className="absolute left-[5px] top-[5px]">
                            <LegendRow label="RSI (14, close)" vals={[{ t: "41.5756", c: "text-[#9c27b0]" }]} />
                        </div>
                    </div>
                    <div className="relative h-full w-[50px] border-l border-[#555]">
                        <Tick y={20}>80.0000</Tick>
                        <Tick y={56}>40.0000</Tick>
                        <Tag y={22} bg="bg-[#8e1ba0]">69.3539</Tag>
                    </div>
                </section>
                <TimeAxis />
                <BottomBar />
            </div>
        </div>
    );
}
